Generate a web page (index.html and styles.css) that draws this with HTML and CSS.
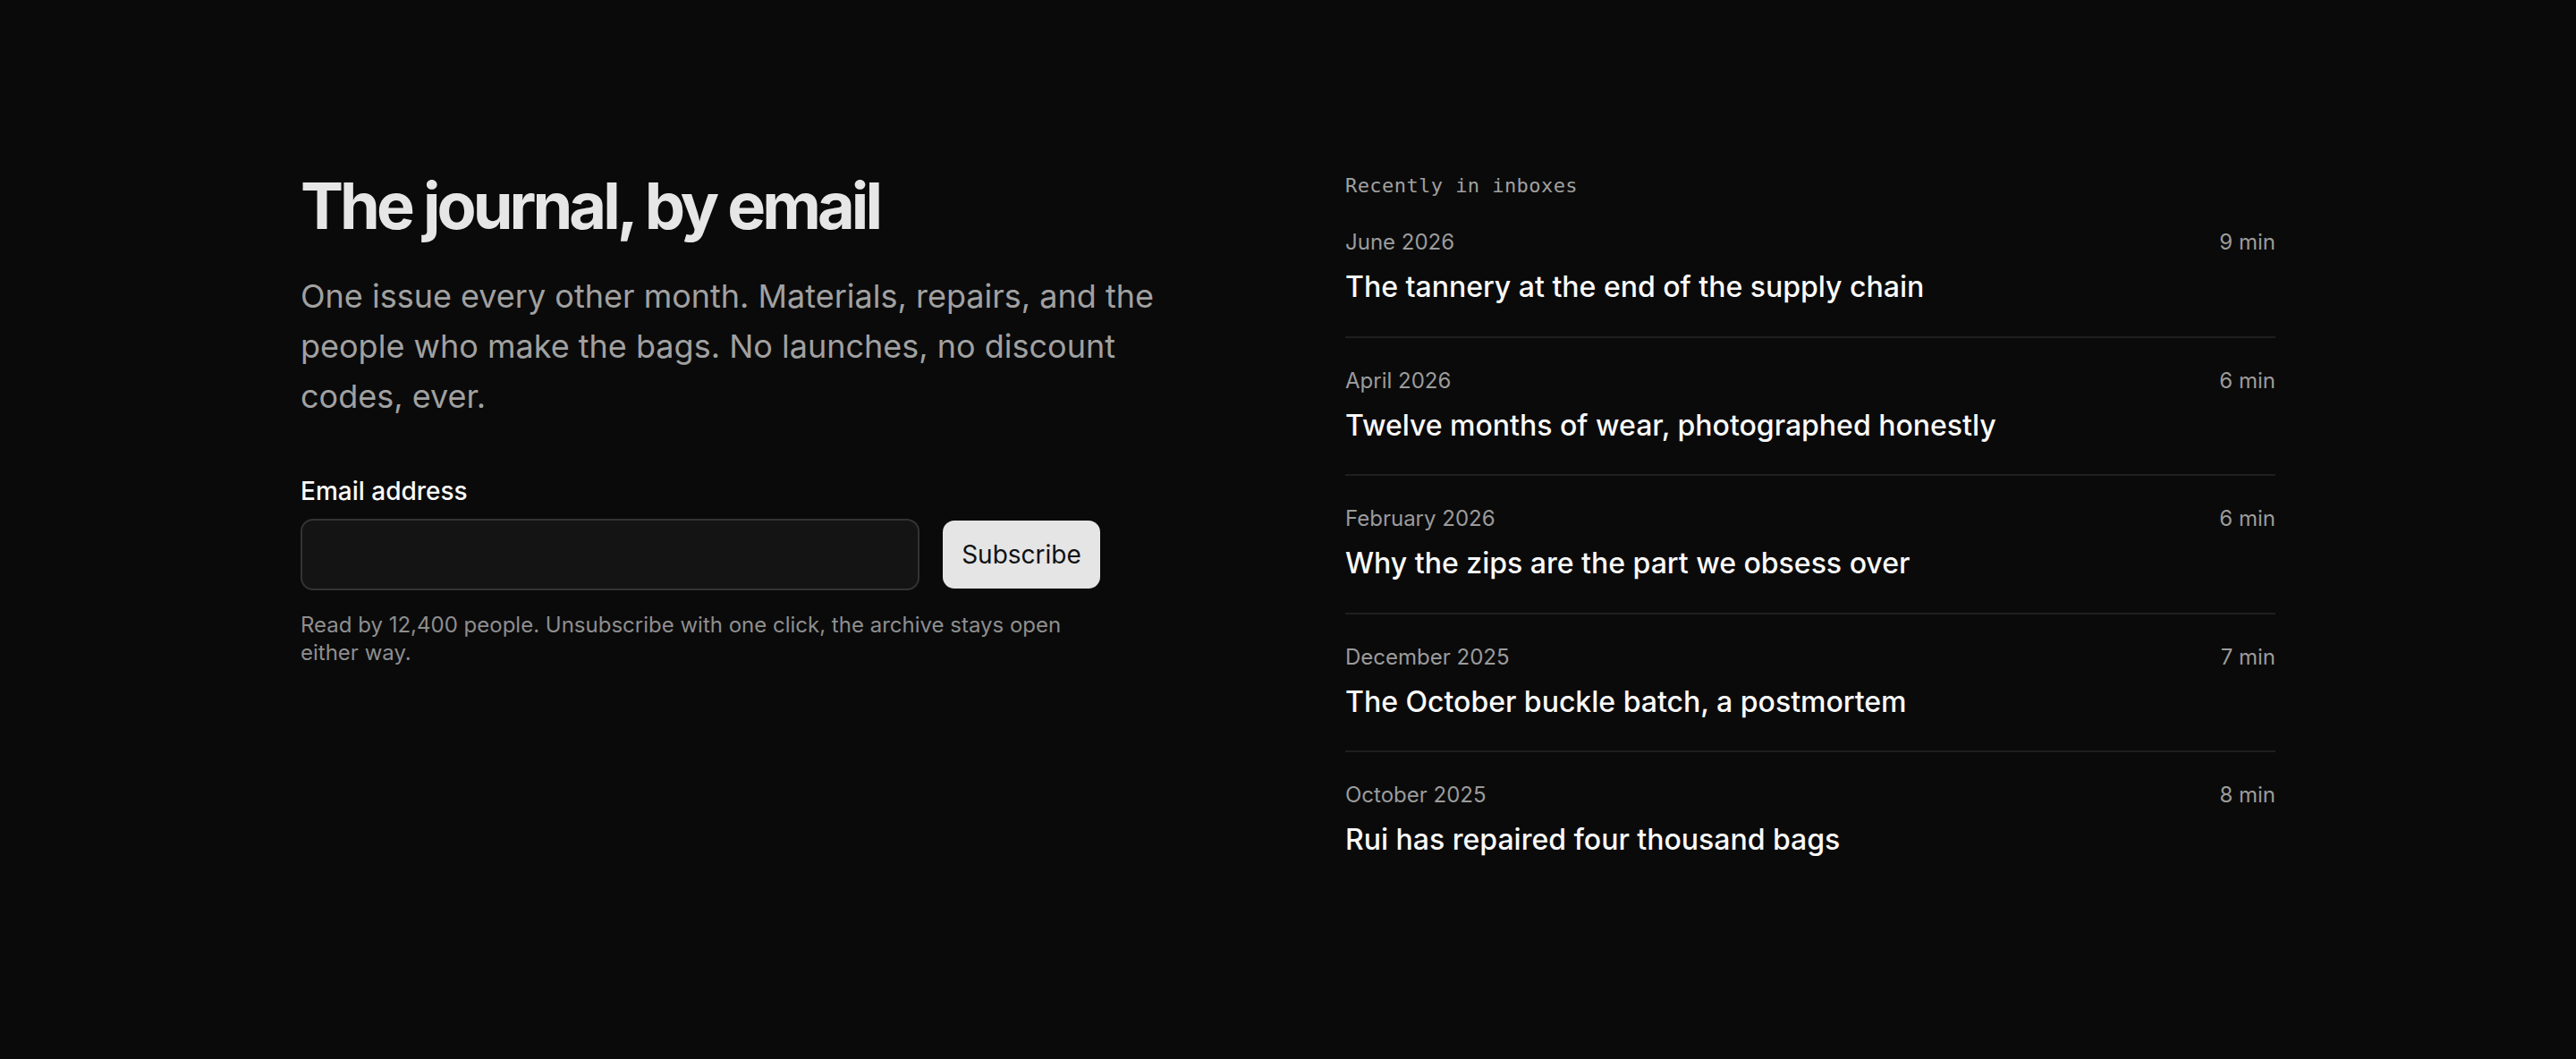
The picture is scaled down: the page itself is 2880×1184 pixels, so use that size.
FILE: index.html
```html
<!DOCTYPE html>
<html lang="en">
<head>
<meta charset="utf-8">
<title>The journal, by email</title>
<link rel="stylesheet" href="styles.css">
</head>
<body>
<main class="page">
  <section class="intro">
    <h1 class="title">The journal, by email</h1>
    <p class="lede">One issue every other month. Materials, repairs, and the people who make the bags. No launches, no discount codes, ever.</p>
    <form class="signup">
      <label class="field-label" for="email">Email address</label>
      <div class="field-row">
        <input class="field-input" id="email" type="email">
        <button class="field-button" type="button">Subscribe</button>
      </div>
      <p class="note">Read by 12,400 people. Unsubscribe with one click, the archive stays open either way.</p>
    </form>
  </section>
  <section class="recent">
    <h2 class="recent-label">Recently in inboxes</h2>
    <ul class="issues">
      <li class="issue">
        <div class="issue-meta"><span>June 2026</span><span>9 min</span></div>
        <div class="issue-title">The tannery at the end of the supply chain</div>
      </li>
      <li class="issue">
        <div class="issue-meta"><span>April 2026</span><span>6 min</span></div>
        <div class="issue-title">Twelve months of wear, photographed honestly</div>
      </li>
      <li class="issue">
        <div class="issue-meta"><span>February 2026</span><span>6 min</span></div>
        <div class="issue-title">Why the zips are the part we obsess over</div>
      </li>
      <li class="issue">
        <div class="issue-meta"><span>December 2025</span><span>7 min</span></div>
        <div class="issue-title">The October buckle batch, a postmortem</div>
      </li>
      <li class="issue">
        <div class="issue-meta"><span>October 2025</span><span>8 min</span></div>
        <div class="issue-title">Rui has repaired four thousand bags</div>
      </li>
    </ul>
  </section>
</main>
</body>
</html>
```

FILE: styles.css
```css
* {
  box-sizing: border-box;
}

html, body {
  margin: 0;
  padding: 0;
  background: #0a0a0a;
}

body {
  font-family: Inter, "Noto Sans", "Liberation Sans", sans-serif;
  color: #f5f5f5;
  min-height: 1184px;
}

.page {
  width: 2208px;
  margin: 0 auto;
  padding-top: 192px;
  display: grid;
  grid-template-columns: 1fr 1fr;
  column-gap: 128px;
  align-items: start;
}

.title {
  margin: 0;
  font-size: 72px;
  line-height: 1.05;
  font-weight: 700;
  letter-spacing: -0.055em;
  color: #e6e6e6;
}

.lede {
  margin: 35px 0 0;
  max-width: 980px;
  font-size: 36px;
  line-height: 56px;
  color: #a1a1a1;
}

.signup {
  margin-top: 58px;
  max-width: 894px;
}

.field-label {
  display: block;
  font-size: 28px;
  line-height: 40px;
  font-weight: 500;
  color: #fafafa;
  margin-bottom: 11px;
}

.field-row {
  display: flex;
  align-items: center;
  gap: 26px;
}

.field-input {
  flex: 1;
  min-width: 0;
  height: 80px;
  background: #141414;
  border: 2px solid #333333;
  border-radius: 14px;
  color: #f5f5f5;
  font: inherit;
  font-size: 28px;
  padding: 0 24px;
  outline: none;
}

.field-button {
  flex: none;
  width: 176px;
  height: 76px;
  border: none;
  border-radius: 13px;
  background: #e5e5e5;
  color: #111111;
  font-family: inherit;
  font-size: 28px;
  font-weight: 400;
  padding: 0;
}

.note {
  margin: 23px 0 0;
  font-size: 24px;
  line-height: 31.2px;
  color: #8e8e8e;
}

.recent-label {
  margin: 1px 0 0;
  font-family: "DejaVu Sans Mono", "Liberation Mono", monospace;
  font-size: 22px;
  line-height: 30px;
  font-weight: 400;
  letter-spacing: 0.02em;
  color: #a0a0a0;
}

.issues {
  list-style: none;
  margin: 0;
  padding: 0;
}

.issue {
  padding: 32px 0 34px;
  border-bottom: 2px solid #1f1f1f;
}

.issue:last-child {
  border-bottom: none;
}

.issue-meta {
  display: flex;
  justify-content: space-between;
  font-size: 24px;
  line-height: 32px;
  color: #9b9b9b;
}

.issue-title {
  margin-top: 13px;
  font-size: 32px;
  line-height: 41.6px;
  font-weight: 500;
  color: #fafafa;
}
```
